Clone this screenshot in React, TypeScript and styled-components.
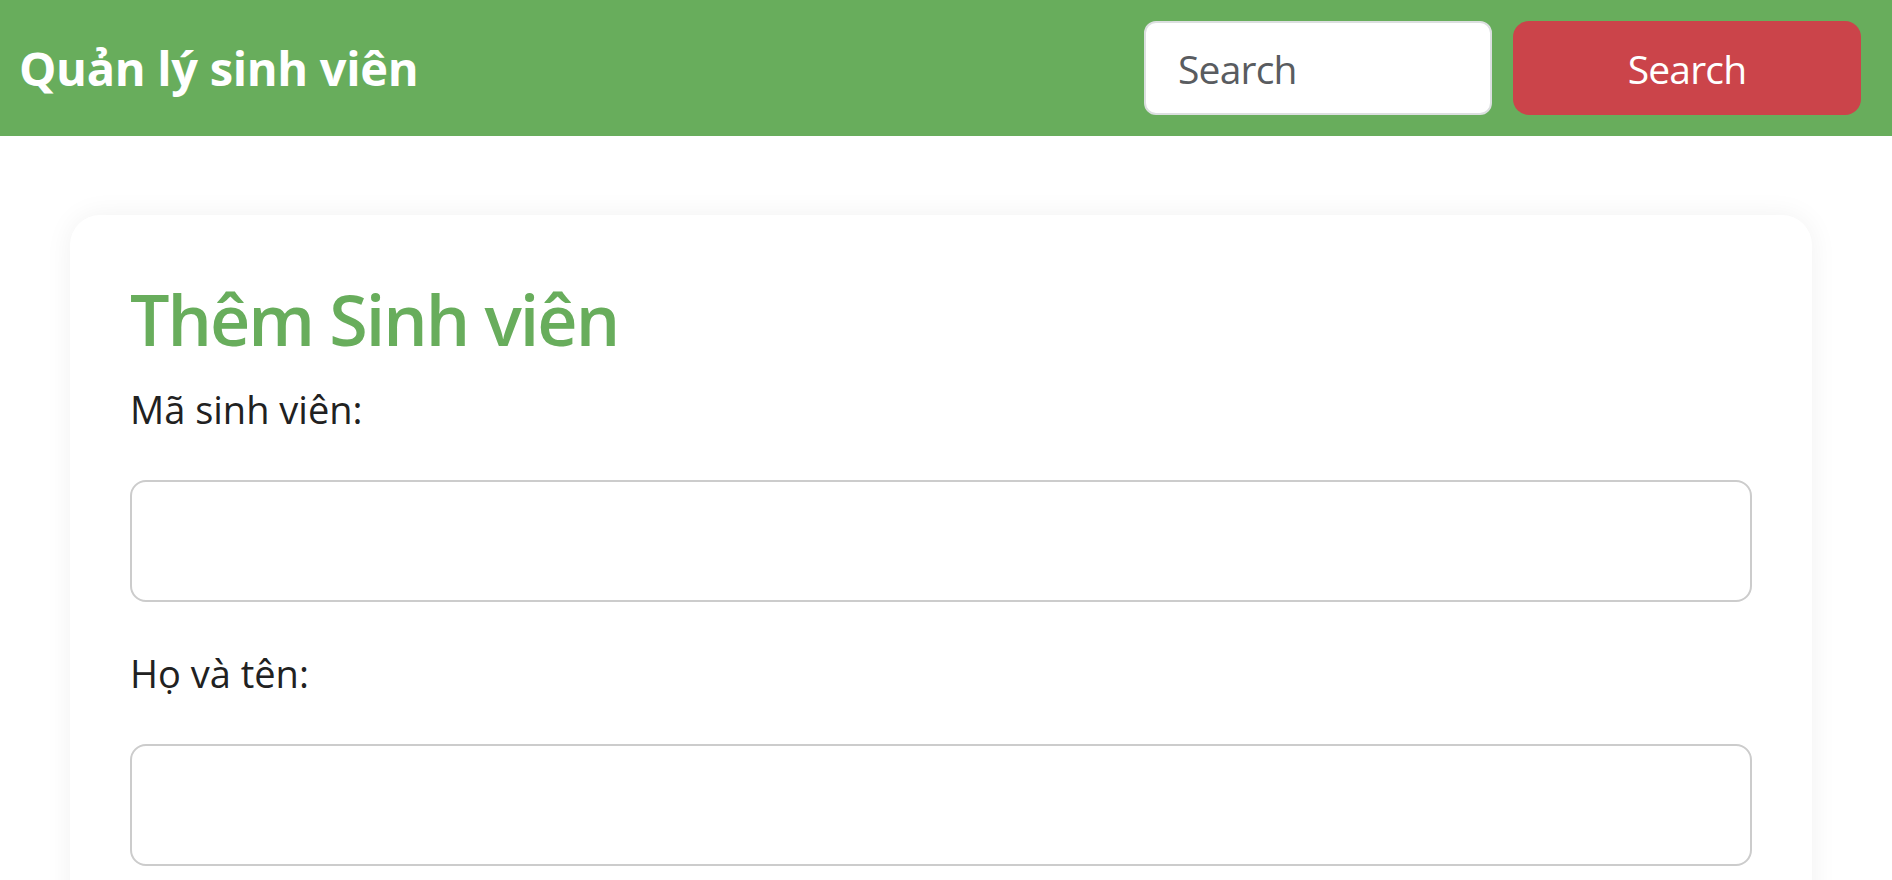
import React from "react";
import styled, { createGlobalStyle } from "styled-components";

const GlobalStyle = createGlobalStyle`
  html, body {
    margin: 0;
    padding: 0;
    background: #ffffff;
    font-family: "Open Sans", "Noto Sans", "Liberation Sans", sans-serif;
  }
  * { box-sizing: border-box; }
`;

const Header = styled.header`
  display: flex;
  align-items: center;
  justify-content: space-between;
  height: 136px;
  padding: 0 31px 0 19px;
  background: #68ad5c;
`;

const Brand = styled.h1`
  margin: 0;
  font-size: 47px;
  line-height: 57px;
  font-weight: 700;
  letter-spacing: -0.3px;
  color: #ffffff;
`;

const SearchForm = styled.form`
  display: flex;
  align-items: center;
  gap: 21px;
`;

const SearchInput = styled.input`
  width: 348px;
  height: 94px;
  padding: 0 0 0 32px;
  border: 2px solid #dcdfe0;
  border-radius: 12px;
  background: #ffffff;
  font-family: inherit;
  font-size: 39px;
  letter-spacing: -0.8px;
  color: #333;
  outline: none;
  &::placeholder {
    color: #595c60;
  }
`;

const SearchButton = styled.button`
  width: 348px;
  height: 94px;
  border: none;
  border-radius: 16px;
  background: #cb444a;
  color: #ffffff;
  font-family: inherit;
  font-size: 39px;
  letter-spacing: -0.8px;
  cursor: pointer;
`;

const Main = styled.main`
  padding: 79px 80px 0 70px;
`;

const Card = styled.section`
  background: #ffffff;
  border-radius: 30px;
  box-shadow: 0 0 28px rgba(0, 0, 0, 0.06);
  padding: 61px 60px 60px;
  min-height: 800px;
`;

const Title = styled.h2`
  margin: 0 0 23px;
  font-size: 70px;
  line-height: 86px;
  font-weight: 600;
  letter-spacing: -2px;
  color: #68ad5c;
`;

const Field = styled.div`
  display: flex;
  flex-direction: column;
  & + & {
    margin-top: 47px;
  }
`;

const Label = styled.label`
  display: block;
  margin-bottom: 47px;
  font-size: 38px;
  line-height: 48px;
  color: #212121;
`;

const TextInput = styled.input`
  width: 100%;
  height: 122px;
  padding: 0 24px;
  border: 2px solid #cccccc;
  border-radius: 16px;
  font-family: inherit;
  font-size: 38px;
  outline: none;
`;

export default function App() {
  return (
    <>
      <GlobalStyle />
      <Header>
        <Brand>Quản lý sinh viên</Brand>
        <SearchForm onSubmit={(e) => e.preventDefault()}>
          <SearchInput placeholder="Search" />
          <SearchButton type="submit">Search</SearchButton>
        </SearchForm>
      </Header>
      <Main>
        <Card>
          <Title>Thêm Sinh viên</Title>
          <Field>
            <Label htmlFor="ma">Mã sinh viên:</Label>
            <TextInput id="ma" />
          </Field>
          <Field>
            <Label htmlFor="ten">Họ và tên:</Label>
            <TextInput id="ten" />
          </Field>
        </Card>
      </Main>
    </>
  );
}
